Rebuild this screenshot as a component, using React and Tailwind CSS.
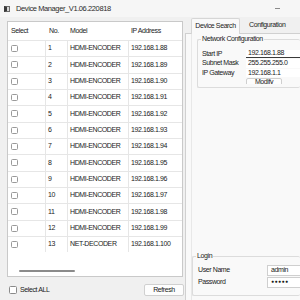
const ROWS = [
  [1, 'HDMI-ENCODER', '192.168.1.88'],
  [2, 'HDMI-ENCODER', '192.168.1.89'],
  [3, 'HDMI-ENCODER', '192.168.1.90'],
  [4, 'HDMI-ENCODER', '192.168.1.91'],
  [5, 'HDMI-ENCODER', '192.168.1.92'],
  [6, 'HDMI-ENCODER', '192.168.1.93'],
  [7, 'HDMI-ENCODER', '192.168.1.94'],
  [8, 'HDMI-ENCODER', '192.168.1.95'],
  [9, 'HDMI-ENCODER', '192.168.1.96'],
  [10, 'HDMI-ENCODER', '192.168.1.97'],
  [11, 'HDMI-ENCODER', '192.168.1.98'],
  [12, 'HDMI-ENCODER', '192.168.1.99'],
  [13, 'NET-DECODER', '192.168.1.100'],
]

function Check() {
  return <span className="block w-[7px] h-[7px] border border-[#9a9a9a] rounded-[1.5px] bg-white" />
}

export default function App() {
  return (
    <div className="w-[300px] h-[300px] overflow-hidden bg-[#f0f0f0] flex flex-col font-['Liberation_Sans',Arial,sans-serif] text-[7px] tracking-[-0.4px] text-[#1b1b1b]">
      {/* Title bar */}
      <div className="h-[17px] shrink-0 bg-[#f6f6f6] flex items-center pl-[4px] pr-[20px]">
        <span className="w-[6px] h-[6px] border border-[#6b6b6b] bg-[#d8d8d8] border-l-[3px] border-l-[#3a3a3a]" />
        <span className="ml-[6px] text-[7.5px] text-[#2b2b2b]">Device Manager_V1.06.220818</span>
        <span className="ml-auto w-[5px] h-px bg-[#8a8a8a]" />
      </div>

      <div className="flex flex-1 min-h-0">
        {/* Device table */}
        <div className="w-[185px] shrink-0 flex flex-col pl-[7px] pt-[4px]">
          <div className="w-[176px] h-[256px] border border-[#c9c9c9] bg-white flex flex-col">
            <div className="h-[18px] shrink-0 flex items-center">
              <div className="w-[38px] pl-[3px]">Select</div>
              <div className="w-[22px] pl-[3px]">No.</div>
              <div className="w-[61px] pl-[2px]">Model</div>
              <div className="pl-[2px]">IP Address</div>
            </div>
            {ROWS.map(([no, model, ip]) => (
              <div key={no} className="h-[16.33px] shrink-0 flex border-t border-[#e6e6e6]">
                <div className="w-[38px] flex items-center pl-[3px] border-r border-[#e6e6e6]">
                  <Check />
                </div>
                <div className="w-[22px] flex items-center pl-[2px] border-r border-[#e6e6e6]">{no}</div>
                <div className="w-[61px] flex items-center pl-[2px] border-r border-[#e6e6e6]">{model}</div>
                <div className="flex-1 flex items-center pl-[2px]">{ip}</div>
              </div>
            ))}
            <div className="flex-1" />
            <div className="h-[2px] w-[56px] ml-[11px] mb-[4px] bg-[#8b8b8b] rounded-full" />
          </div>
          <div className="w-[177px] mt-[7px] h-[12px] flex items-center">
            <span className="ml-[2px] block w-[8px] h-[8px] border border-[#8a8a8a] rounded-[1.5px] bg-white" />
            <span className="ml-[3px]">Select ALL</span>
            <button className="ml-auto w-[40px] h-[12px] border border-[#d0d0d0] bg-[#fdfdfd] rounded-[2px] flex items-center justify-center">
              Refresh
            </button>
          </div>
        </div>

        {/* Right panel */}
        <div className="flex-1 flex flex-col min-w-0">
          <div className="h-[16px] shrink-0 flex items-end">
            <div className="relative z-10 -mb-px ml-[6px] w-[49px] h-[16px] border border-b-0 border-[#d6d6d6] bg-[#f9f9f9] rounded-t-[2px] flex items-center justify-center">
              Device Search
            </div>
            <div className="ml-[9px] h-[15px] flex items-center">Configuration</div>
          </div>
          <div className="flex-1 bg-[#f9f9f9] border-l border-t border-[#d0d0d0] flex flex-col">
            <div className="flex-1 ml-[5px] border-l border-[#e8e8e8] flex flex-col">
              <fieldset className="ml-[5px] h-[54px] border border-r-0 border-[#dcdcdc] rounded-[2px] pl-[4px]">
                <legend className="-ml-[1px] px-[1px]">Network Configuration</legend>
                <div className="mt-[5px] grid grid-cols-[44px_1fr] gap-y-[1px]">
                  <div className="h-[8.5px] flex items-center">Start IP</div>
                  <div className="h-[8.5px] flex items-center pl-[2px] bg-white border-b border-[#3a3a3a]">192.168.1.88</div>
                  <div className="h-[8.5px] flex items-center">Subnet Mask</div>
                  <div className="h-[8.5px] flex items-center pl-[2px] bg-white">255.255.255.0</div>
                  <div className="h-[8.5px] flex items-center">IP Gateway</div>
                  <div className="h-[8.5px] flex items-center pl-[2px] bg-white">192.168.1.1</div>
                  <div />
                  <div className="h-[6px] overflow-hidden">
                    <div className="w-[36px] h-[9px] border border-[#cfcfcf] bg-[#fdfdfd] rounded-[2px] flex items-center justify-center">
                      Modify
                    </div>
                  </div>
                </div>
              </fieldset>

              <fieldset className="mt-auto mb-[4px] h-[45px] border border-r-0 border-[#dcdcdc] rounded-[2px] pl-[5px]">
                <legend className="-ml-[2px] px-[1px]">Login</legend>
                <div className="mt-[3px] grid grid-cols-[69px_1fr] gap-y-[1px] items-center">
                  <div>User Name</div>
                  <div className="h-[11px] flex items-center pl-[3px] bg-white border border-r-0 border-[#cfcfcf]">admin</div>
                  <div>Password</div>
                  <div className="h-[11px] flex items-center pl-[3px] bg-white border border-r-0 border-[#cfcfcf] text-[5px] tracking-[0.5px]">●●●●●</div>
                </div>
              </fieldset>
            </div>
          </div>
        </div>
      </div>
    </div>
  )
}
